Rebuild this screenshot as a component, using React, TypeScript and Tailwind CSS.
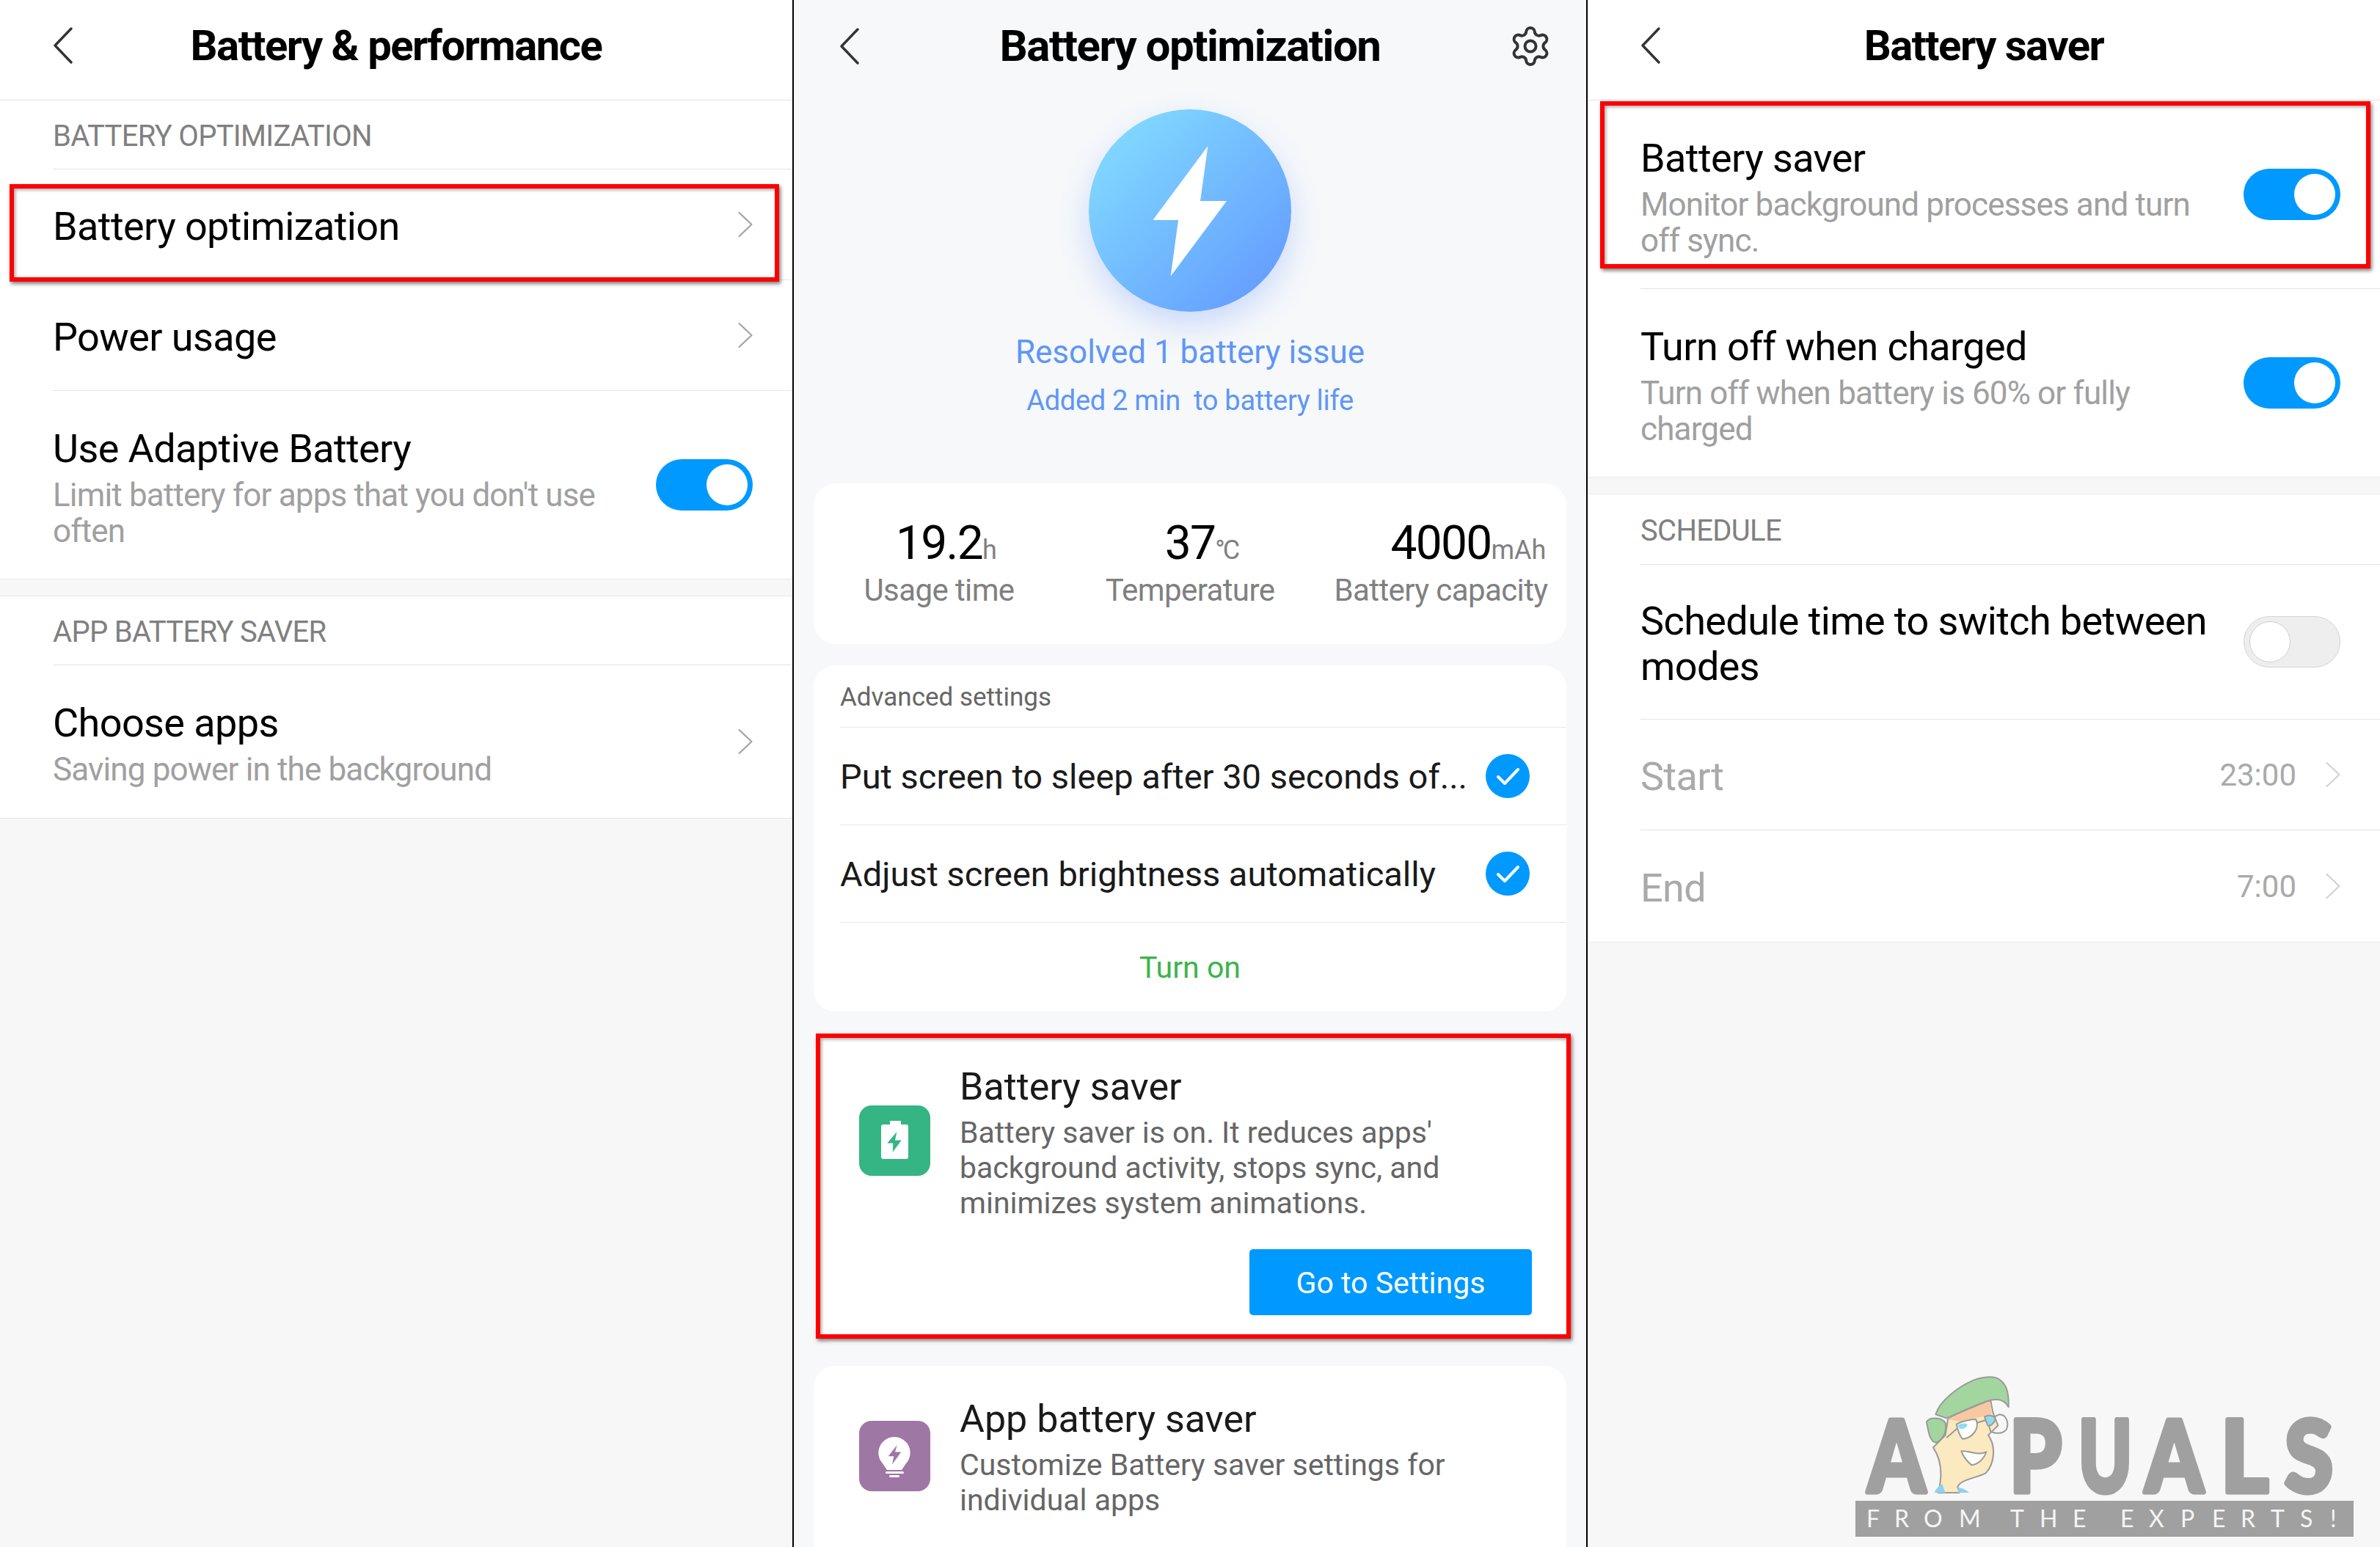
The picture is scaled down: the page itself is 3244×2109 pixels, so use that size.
import type { ReactNode } from "react";
import { Settings } from "lucide-react";

const BackIcon = () => (
  <svg width="28" height="50" viewBox="0 0 28 50" fill="none" stroke="#333" strokeWidth="3.4" strokeLinecap="round" strokeLinejoin="round">
    <path d="M25 2 L3 25 L25 48" />
  </svg>
);

const ChevronIcon = ({ color = "#a6a6a6" }: { color?: string }) => (
  <svg width="20" height="36" viewBox="0 0 20 36" fill="none" stroke={color} strokeWidth="2.2" strokeLinecap="round" strokeLinejoin="round">
    <path d="M1.5 2 L18.5 18 L1.5 34" />
  </svg>
);

const Toggle = ({ on = true }: { on?: boolean }) =>
  on ? (
    <div className="flex h-[70px] w-[132px] shrink-0 items-center justify-end rounded-full bg-[#0099ff] pr-[7px]">
      <div className="h-[56px] w-[56px] rounded-full bg-white" />
    </div>
  ) : (
    <div className="flex h-[70px] w-[132px] shrink-0 items-center rounded-full border border-[#d4d4d4] bg-[#eeeeee] pl-[7px]">
      <div className="h-[56px] w-[56px] rounded-full border border-[#cfcfcf] bg-white" />
    </div>
  );

const Header = ({ title, action, tint }: { title: string; action?: ReactNode; tint?: boolean }) => (
  <div className={`grid h-[137px] shrink-0 grid-cols-[1fr_auto_1fr] items-center px-[50px] pb-[12px] ${tint ? "" : "border-b border-[#e2e2e2]"}`}>
    <div className={`flex items-center ${tint ? "ml-[12px]" : "ml-[22px]"}`}>
      <BackIcon />
    </div>
    <div className={`font-bold leading-none tracking-[-1.5px] text-black ${tint ? "text-[60px]" : "text-[58px]"}`}>{title}</div>
    <div className="-mr-[4px] flex items-center justify-end">{action}</div>
  </div>
);

const SectionLabel = ({ label, height = "h-[94px]" }: { label: string; height?: string }) => (
  <div className="bg-white pl-[72px]">
    <div className={`flex ${height} items-center border-b border-[#e4e4e4] pt-[5px] text-[40px] tracking-[-0.7px] text-[#808080]`}>{label}</div>
  </div>
);

const Gap = ({ h }: { h: string }) => <div className={`${h} border-y border-[#e8e8e8] bg-[#f7f7f7]`} />;

const Row = ({
  title,
  lines,
  right,
  height,
  last,
  muted,
}: {
  title: ReactNode;
  lines?: string[];
  right?: ReactNode;
  height: string;
  last?: boolean;
  muted?: boolean;
}) => (
  <div className="bg-white pl-[72px]">
    <div className={`flex ${height} items-center justify-between pr-[54px] ${last ? "" : "border-b border-[#e4e4e4]"}`}>
      <div className={`min-w-0 flex-1 pr-[40px] ${lines ? "pt-[7px]" : "pt-[5px]"}`}>
        <div className={`text-[54px] leading-[62px] tracking-[-0.6px] ${muted ? "text-[#aaaaaa]" : "text-black"}`}>{title}</div>
        {lines && (
          <div className="mt-[8px]">
            {lines.map((line) => (
              <div key={line} className="whitespace-nowrap text-[44px] leading-[49px] tracking-[-0.85px] text-[#a0a0a0]">
                {line}
              </div>
            ))}
          </div>
        )}
      </div>
      {right}
    </div>
  </div>
);

const RedBox = ({ className }: { className: string }) => (
  <div className={`pointer-events-none absolute border-[6px] border-[#ff0000] shadow-[2px_3px_5px_rgba(0,0,0,0.5),inset_2px_2px_4px_rgba(0,0,0,0.35)] ${className}`} />
);

const Stat = ({ value, unit, label, unitClass = "" }: { value: string; unit: string; label: string; unitClass?: string }) => (
  <div className="flex flex-col items-center">
    <div className="flex h-[67px] items-end leading-none">
      <span className="text-[64px] tracking-[-1.7px] text-black">{value}</span>
      {/* the unit hangs off the number, so the number itself stays centred */}
      <span className={`mb-[5px] w-0 whitespace-nowrap text-[36px] text-[#808080] ${unitClass}`}>{unit}</span>
    </div>
    <div className="mt-[6px] whitespace-nowrap text-[42px] leading-[52px] tracking-[-0.6px] text-[#808080]">{label}</div>
  </div>
);

const CheckRow = ({ text }: { text: string }) => (
  <div className="flex h-[133px] items-center justify-between border-b border-[#e8e8e8] pr-[50px]">
    <span className="whitespace-nowrap pt-[3px] text-[47px] text-[#1a1a1a]">{text}</span>
    <svg width="60" height="60" viewBox="0 0 60 60" className="shrink-0">
      <circle cx="30" cy="30" r="30" fill="#0099ff" />
      <path d="M17 31 L26 40 L44 21" fill="none" stroke="#fff" strokeWidth="4" strokeLinecap="round" strokeLinejoin="round" />
    </svg>
  </div>
);

const BatteryIcon = () => (
  <svg width="97" height="96" viewBox="0 0 97 96" className="mt-[56px] shrink-0">
    <rect width="97" height="96" rx="17" fill="#35b583" />
    <path d="M42 21 h15 v5 h7 a3 3 0 0 1 3 3 v41 a3 3 0 0 1 -3 3 H33 a3 3 0 0 1 -3 -3 V29 a3 3 0 0 1 3 -3 h9 z" fill="#fff" />
    <path d="M51.3 36 L38.3 51.5 H46.3 L45.7 63.7 L57.7 47.6 H49 Z" fill="#35b583" />
  </svg>
);

const BulbIcon = () => (
  <svg width="97" height="96" viewBox="0 0 97 96" className="mt-[33px] shrink-0">
    <rect width="97" height="96" rx="17" fill="#9e77a5" />
    <path d="M48 22 a21.5 21.5 0 0 1 16 36 l-6 9 h-20 l-6 -9 a21.5 21.5 0 0 1 16 -36 z" fill="#fff" />
    <rect x="36" y="69" width="25" height="3" rx="1.5" fill="#fff" />
    <rect x="41" y="74" width="14" height="3" rx="1.5" fill="#fff" />
    <path d="M51.7 32.9 L39.7 48.2 H47.3 L45 59.6 L57.3 42.4 H49 Z" fill="#9e77a5" />
  </svg>
);

const Watermark = () => {
  const big = [
    { c: "A", x: 43, w: 84 },
    { c: "P", x: 236, w: 77 },
    { c: "U", x: 330, w: 79 },
    { c: "A", x: 421, w: 85 },
    { c: "L", x: 524, w: 71 },
    { c: "S", x: 611, w: 72 },
  ];
  const small = "F R O M T H E E X P E R T S !".split(" ");
  const xs = [44, 82, 122, 170, 240, 280, 325, 390, 429, 472, 515, 554, 595, 635, 676];
  return (
    <svg width="744" height="269" viewBox="0 0 744 269" className="pointer-events-none absolute bottom-0 right-0">
      {big.map((l) => (
        <text
          key={l.x}
          x={l.x + 3}
          y="194"
          textLength={l.w - 6}
          lengthAdjust="spacingAndGlyphs"
          fontFamily="Lato, sans-serif"
          fontWeight="900"
          fontSize="136"
          fill="#a0a0a0"
          stroke="#a0a0a0"
          strokeWidth="7"
          strokeLinejoin="round"
        >
          {l.c}
        </text>
      ))}
      <rect x="29" y="206" width="679" height="49" fill="#a0a0a0" />
      {small.map((c, i) => (
        <text key={xs[i]} x={xs[i]} y="242" fontFamily="Lato, sans-serif" fontSize="32" fill="#f5f5f5">
          {c}
        </text>
      ))}
      <g transform="translate(110 20) scale(0.3333)" stroke="#9a9a9a" strokeWidth="6" strokeLinejoin="round">
        <path d="M75 340 L125 290 L135 225 C200 190 270 165 310 150 L320 200 L340 250 L300 290 C330 330 330 400 290 445 C250 465 190 470 175 500 L182 525 H95 C110 470 115 400 75 340 Z" fill="#fbe9bf" />
        <path d="M135 225 C190 195 260 170 305 150 L315 205 L190 235 Z" fill="#f8c9a0" stroke="none" />
        <path d="M85 205 C100 150 180 90 240 65 C280 50 330 45 350 65 C375 85 385 115 383 175 C370 150 350 140 320 145 C280 150 200 190 130 220 Z" fill="#a3d69f" />
        <path d="M48 235 C60 215 110 215 125 240 C130 270 120 300 90 320 C60 322 55 270 48 235 Z" fill="#a3d69f" />
        <path d="M130 300 L170 265 L300 225 L345 205 C375 205 385 240 375 265 C360 285 330 285 310 275 L300 240" fill="none" />
        <path d="M170 245 C195 230 235 225 250 225 C265 260 240 300 195 305 C180 290 175 265 170 245 Z" fill="#fff" />
        <path d="M175 250 C185 240 205 240 215 245 C215 258 195 268 182 262 Z" fill="#8fdcf0" stroke="none" />
        <path d="M285 215 C300 205 325 210 330 222 C325 240 310 255 298 250 Z" fill="#8fdcf0" />
        <path d="M190 355 C220 352 260 375 292 358 C282 390 255 410 232 412 C212 395 197 375 190 355 Z" fill="#fff" />
        <path d="M80 525 C85 510 100 495 112 490 L125 525 Z" fill="#8fd0ef" stroke="none" />
        <path d="M178 505 C195 505 210 515 222 525 H175 Z" fill="#8fd0ef" stroke="none" />
      </g>
    </svg>
  );
};

const App = () => {
  return (
    <div className="flex h-[2109px] w-[3244px] overflow-hidden bg-black font-['Roboto',sans-serif]">
      {/* Left phone */}
      <div className="relative flex w-[1080px] shrink-0 flex-col bg-[#f7f7f7]">
        <div className="bg-white">
          <Header title="Battery & performance" />
        </div>
        <SectionLabel label="BATTERY OPTIMIZATION" />
        <Row title="Battery optimization" right={<ChevronIcon />} height="h-[151px]" />
        <Row title="Power usage" right={<ChevronIcon />} height="h-[151px]" />
        <Row title="Use Adaptive Battery" lines={["Limit battery for apps that you don't use", "often"]} right={<Toggle />} height="h-[256px]" last />
        <Gap h="h-[24px]" />
        <SectionLabel label="APP BATTERY SAVER" />
        <Row title="Choose apps" lines={["Saving power in the background"]} right={<ChevronIcon />} height="h-[208px]" last />
        <div className="border-t border-[#e8e8e8]" />
        <RedBox className="left-[13px] top-[251px] h-[133px] w-[1049px]" />
      </div>

      {/* Middle phone */}
      <div className="relative ml-[2px] flex w-[1080px] shrink-0 flex-col overflow-hidden bg-[#f6f8fa]">
        <Header title="Battery optimization" tint action={<Settings size={60} strokeWidth={1.6} color="#333" />} />
        <div className="mt-[12px] flex flex-col items-center">
          <div className="flex h-[276px] w-[276px] items-center justify-center rounded-full bg-linear-to-br from-[#86e1ff] to-[#6295ff] shadow-[0_18px_40px_rgba(98,149,255,0.3)]">
            <svg width="276" height="276" viewBox="0 0 276 276">
              <path d="M162.4 50 L152 125 H188 L111.7 227.5 L122 151 H87.4 Z" fill="#fff" />
            </svg>
          </div>
          <div className="mt-[26px] text-[44px] leading-[58px] text-[#5f96f6]">Resolved 1 battery issue</div>
          <div className="mt-[12px] whitespace-pre text-[38px] leading-[50px] tracking-[-0.3px] text-[#5f96f6]">Added 2 min  to battery life</div>
        </div>

        <div className="mx-[27px] mt-[88px] grid h-[219px] grid-cols-3 items-center rounded-[30px] bg-white">
          <Stat value="19.2" unit="h" label="Usage time" />
          <Stat value="37" unit="°C" label="Temperature" unitClass="tracking-[-3px]" />
          <Stat value="4000" unit="mAh" label="Battery capacity" />
        </div>

        <div className="mx-[27px] mt-[29px] rounded-[30px] bg-white pl-[36px]">
          <div className="flex h-[85px] items-center border-b border-[#e8e8e8] pt-[4px] text-[35px] text-[#666666]">Advanced settings</div>
          <CheckRow text="Put screen to sleep after 30 seconds of..." />
          <CheckRow text="Adjust screen brightness automatically" />
          <div className="flex h-[121px] items-center justify-center pr-[36px] pt-[2px] text-[41px] text-[#39b54a]">Turn on</div>
        </div>

        <div className="mx-[27px] mt-[30px] flex h-[423px] flex-col justify-between rounded-[30px] bg-white pb-[39px] pl-[62px] pr-[47px]">
          <div className="flex items-start gap-[40px] pt-[42px]">
            <BatteryIcon />
            <div>
              <div className="text-[52px] leading-[62px] text-[#1a1a1a]">Battery saver</div>
              <div className="mt-[7px] text-[41px] leading-[48px] text-[#666666]">
                Battery saver is on. It reduces apps'
                <br />
                background activity, stops sync, and
                <br />
                minimizes system animations.
              </div>
            </div>
          </div>
          <div className="flex justify-end">
            <div className="flex h-[90px] w-[385px] items-center justify-center rounded-[5px] bg-[#0099ff] pt-[3px] text-[41px] text-white">Go to Settings</div>
          </div>
        </div>

        <div className="mx-[27px] mt-[30px] flex flex-1 items-start gap-[40px] rounded-t-[30px] bg-white pl-[62px] pt-[42px]">
          <BulbIcon />
          <div>
            <div className="text-[52px] leading-[62px] text-[#1a1a1a]">App battery saver</div>
            <div className="mt-[7px] text-[41px] leading-[48px] text-[#666666]">
              Customize Battery saver settings for
              <br />
              individual apps
            </div>
          </div>
        </div>

        <RedBox className="left-[30px] top-[1409px] h-[416px] w-[1029px]" />
      </div>

      {/* Right phone */}
      <div className="relative ml-[2px] flex w-[1080px] shrink-0 flex-col bg-[#f7f7f7]">
        <div className="bg-white">
          <Header title="Battery saver" />
        </div>
        <Row title="Battery saver" lines={["Monitor background processes and turn", "off sync."]} right={<Toggle />} height="h-[257px]" />
        <Row title="Turn off when charged" lines={["Turn off when battery is 60% or fully", "charged"]} right={<Toggle />} height="h-[256px]" last />
        <Gap h="h-[24px]" />
        <SectionLabel label="SCHEDULE" height="h-[96px]" />
        <Row title={<>Schedule time to switch between<br />modes</>} right={<Toggle on={false} />} height="h-[211px]" />
        <Row title="Start" muted height="h-[151px]" right={
          <div className="flex items-center gap-[40px] text-[42px] text-[#aaaaaa]">
            <span>23:00</span>
            <ChevronIcon color="#d2d2d2" />
          </div>
        } />
        <Row title="End" muted height="h-[152px]" last right={
          <div className="flex items-center gap-[40px] text-[42px] text-[#aaaaaa]">
            <span>7:00</span>
            <ChevronIcon color="#d2d2d2" />
          </div>
        } />
        <div className="border-t border-[#e8e8e8]" />
        <RedBox className="left-[17px] top-[138px] h-[228px] w-[1050px]" />
        <Watermark />
      </div>
    </div>
  );
};

export default App;
